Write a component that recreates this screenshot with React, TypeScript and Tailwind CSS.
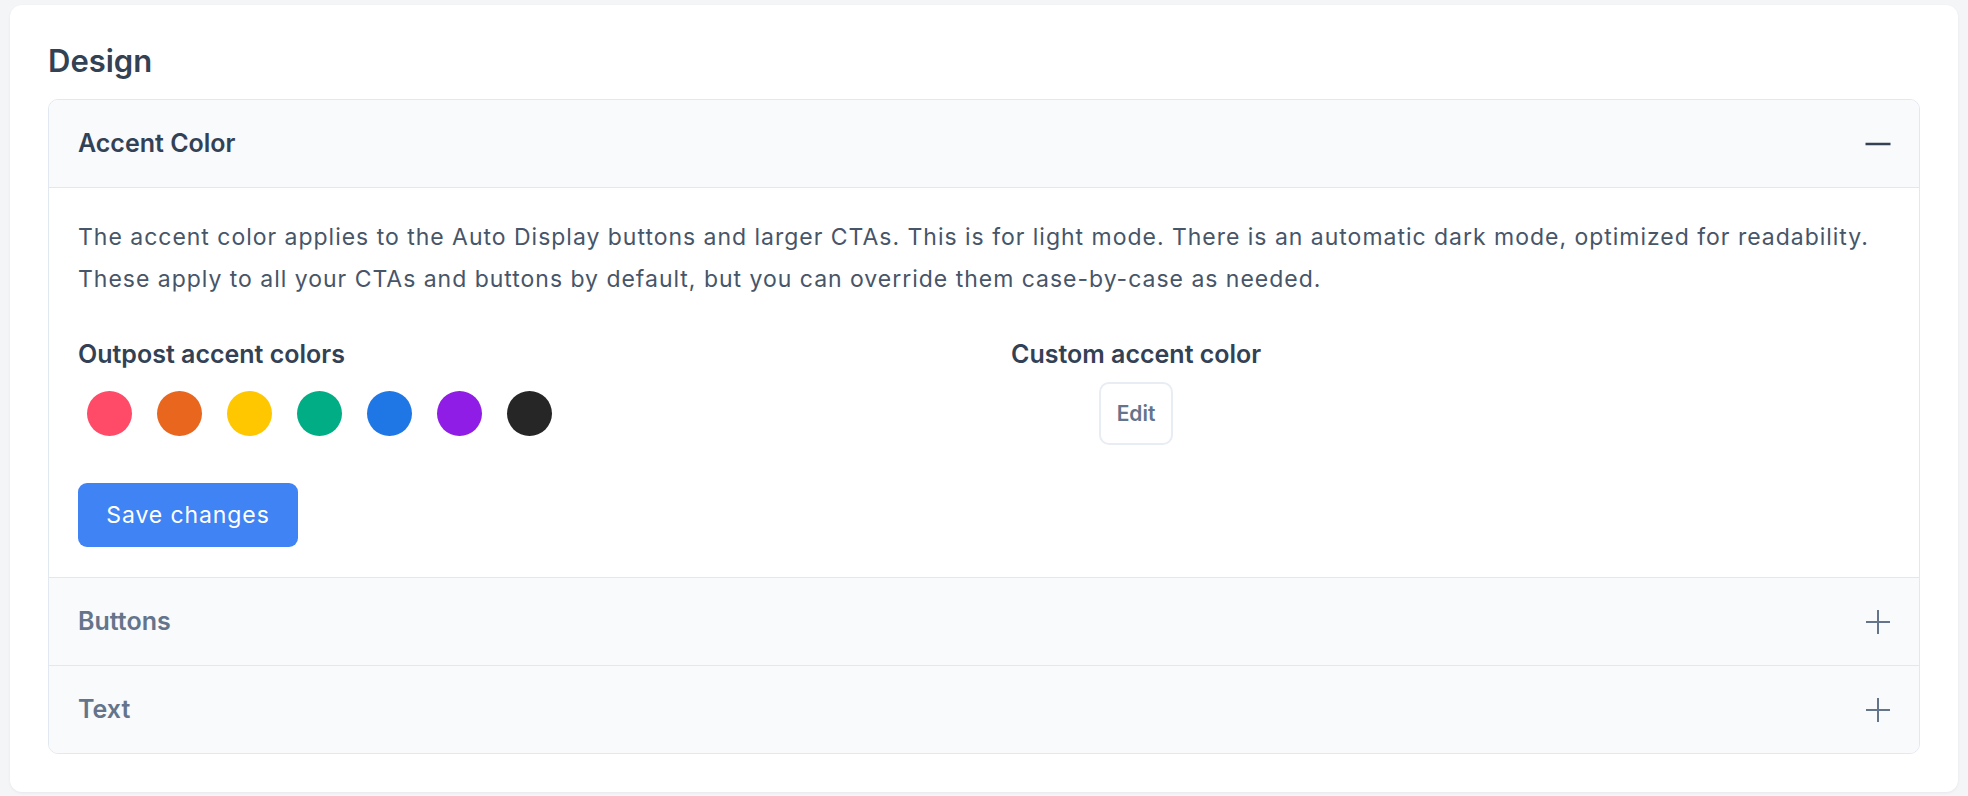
import React from "react";

const swatches = ["#ff4a68", "#e8661e", "#ffc700", "#00ad85", "#1f77e6", "#8f1de6", "#262626"];

function Minus() {
  return (
    <svg width="26" height="26" viewBox="0 0 26 26" fill="none">
      <line x1="0.5" y1="13" x2="25.5" y2="13" stroke="#334155" strokeWidth="2.6" />
    </svg>
  );
}

function Plus() {
  return (
    <svg width="26" height="26" viewBox="0 0 26 26" fill="none">
      <line x1="1" y1="13" x2="25" y2="13" stroke="#64748b" strokeWidth="2" />
      <line x1="13" y1="1" x2="13" y2="25" stroke="#64748b" strokeWidth="2" />
    </svg>
  );
}

export default function App() {
  return (
    <div
      className="min-h-screen bg-[#f4f5f7] px-[10px] pt-[5px] pb-[5px]"
      style={{ fontFamily: "Inter, 'Noto Sans', sans-serif" }}
    >
      <div className="rounded-[12px] bg-white px-[38px] pt-[38px] pb-[38px] shadow-[0_1px_3px_rgba(15,23,42,0.06)]">
        <h2 className="text-[31px] leading-[36px] font-semibold text-[#334155]">Design</h2>
        <div className="mt-[20px] overflow-hidden rounded-[10px] border border-[#e2e8f0]">
          <div className="flex h-[88px] items-center justify-between border-b border-[#e2e8f0] bg-[#f8fafc] pr-[28px] pl-[29px]">
            <span className="text-[25px] font-semibold text-[#334155]">Accent Color</span>
            <Minus />
          </div>
          <div className="bg-white px-[29px] pt-[28px] pb-[30px]">
            <p className="text-[23px] leading-[42px] tracking-[0.98px] whitespace-nowrap text-[#475569]">
              The accent color applies to the Auto Display buttons and larger CTAs. This is for light mode. There is an
              automatic dark mode, optimized for readability.
              <br />
              These apply to all your CTAs and buttons by default, but you can override them case-by-case as needed.
            </p>
            <div className="mt-[38px] grid grid-cols-2 gap-x-[54px]">
              <div>
                <h3 className="text-[25px] leading-[32px] font-semibold text-[#334155]">Outpost accent colors</h3>
                <div className="mt-[21px] flex gap-[25px] pl-[9px]">
                  {swatches.map((c) => (
                    <button
                      key={c}
                      className="h-[45px] w-[45px] rounded-full"
                      style={{ backgroundColor: c }}
                      aria-label={c}
                    />
                  ))}
                </div>
              </div>
              <div>
                <h3 className="text-[25px] leading-[32px] font-semibold text-[#334155]">Custom accent color</h3>
                <button className="mt-[12px] ml-[88px] flex h-[63px] w-[74px] items-center justify-center rounded-[10px] border-2 border-[#e8edf3] bg-white text-[21px] font-semibold text-[#64748b]">
                  Edit
                </button>
              </div>
            </div>
            <button className="mt-[38px] flex h-[64px] w-[220px] items-center justify-center rounded-[9px] bg-[#3f83f5] text-[23px] tracking-[0.9px] text-white">
              Save changes
            </button>
          </div>
          <div className="flex h-[88px] items-center justify-between border-t border-[#e2e8f0] bg-[#f8fafc] pr-[28px] pl-[29px]">
            <span className="text-[25px] font-semibold text-[#64748b]">Buttons</span>
            <Plus />
          </div>
          <div className="flex h-[88px] items-center justify-between border-t border-[#e2e8f0] bg-[#f8fafc] pr-[28px] pl-[29px]">
            <span className="text-[25px] font-semibold text-[#64748b]">Text</span>
            <Plus />
          </div>
        </div>
      </div>
    </div>
  );
}
